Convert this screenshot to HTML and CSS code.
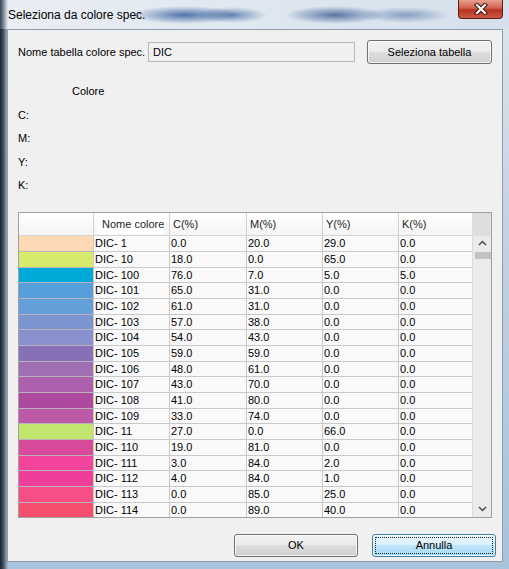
FILE: index.html
```html
<!DOCTYPE html>
<html lang="it">
<head>
  <meta charset="UTF-8" />
  <title>Seleziona da colore spec.</title>
  <link rel="stylesheet" href="styles.css">
</head>
<body>
  <div class="finestra">
    <div class="titolo">
      <span class="titolo-testo">Seleziona da colore spec.</span>
      <div class="chiudi">
        <svg width="18" height="12" viewBox="0 0 18 12">
          <path d="M5 2 L13 10 M13 2 L5 10" stroke="#3a1414" stroke-width="4.2" stroke-linecap="square"/>
          <path d="M5 2 L13 10 M13 2 L5 10" stroke="#fff" stroke-width="2.2" stroke-linecap="square"/>
        </svg>
      </div>
    </div>

    <div class="cliente">
      <div class="riga-tabella">
        <label class="etichetta">Nome tabella colore spec.</label>
        <div class="campo">DIC</div>
        <button class="bottone bottone-sel">Seleziona tabella</button>
      </div>

      <div class="info">
        <div class="info-riga colore">Colore</div>
        <div class="info-riga">C:</div>
        <div class="info-riga">M:</div>
        <div class="info-riga">Y:</div>
        <div class="info-riga">K:</div>
      </div>

      <div class="lista">
        <div class="griglia">
          <div class="riga intestazione">
            <div class="cella"></div>
            <div class="cella"><span class="nome-int">Nome colore</span></div>
            <div class="cella">C(%)</div>
            <div class="cella">M(%)</div>
            <div class="cella">Y(%)</div>
            <div class="cella">K(%)</div>
          </div>
          <div id="corpo"></div>
        </div>
        <div class="scorri">
          <div class="angolo"></div>
          <div class="freccia">
            <svg width="9" height="6" viewBox="0 0 9 6"><path d="M1 5 L4.5 1.5 L8 5" stroke="#505050" stroke-width="1.5" fill="none"/></svg>
          </div>
          <div class="cursore"></div>
          <div class="spazio"></div>
          <div class="freccia">
            <svg width="9" height="6" viewBox="0 0 9 6"><path d="M1 1 L4.5 4.5 L8 1" stroke="#505050" stroke-width="1.5" fill="none"/></svg>
          </div>
        </div>
      </div>

      <div class="pulsanti">
        <button class="bottone">OK</button>
        <button class="bottone bottone-def"><span class="fuoco">Annulla</span></button>
      </div>
    </div>
  </div>

  <script>
    const colori = [
      ['DIC- 1', '#fdd8b4', '0.0', '20.0', '29.0', '0.0'],
      ['DIC- 10', '#d6ea6c', '18.0', '0.0', '65.0', '0.0'],
      ['DIC- 100', '#00aad8', '76.0', '7.0', '5.0', '5.0'],
      ['DIC- 101', '#55a0da', '65.0', '31.0', '0.0', '0.0'],
      ['DIC- 102', '#639fd8', '61.0', '31.0', '0.0', '0.0'],
      ['DIC- 103', '#7b96cf', '57.0', '38.0', '0.0', '0.0'],
      ['DIC- 104', '#8a8fcd', '54.0', '43.0', '0.0', '0.0'],
      ['DIC- 105', '#8770b6', '59.0', '59.0', '0.0', '0.0'],
      ['DIC- 106', '#a06fb3', '48.0', '61.0', '0.0', '0.0'],
      ['DIC- 107', '#ad60ab', '43.0', '70.0', '0.0', '0.0'],
      ['DIC- 108', '#ad4a9e', '41.0', '80.0', '0.0', '0.0'],
      ['DIC- 109', '#bd5aa8', '33.0', '74.0', '0.0', '0.0'],
      ['DIC- 11', '#c2e56e', '27.0', '0.0', '66.0', '0.0'],
      ['DIC- 110', '#d84a9a', '19.0', '81.0', '0.0', '0.0'],
      ['DIC- 111', '#f2449a', '3.0', '84.0', '2.0', '0.0'],
      ['DIC- 112', '#ee3e9a', '4.0', '84.0', '1.0', '0.0'],
      ['DIC- 113', '#f54f85', '0.0', '85.0', '25.0', '0.0'],
      ['DIC- 114', '#f54e6f', '0.0', '89.0', '40.0', '0.0']
    ];

    const corpo = document.getElementById('corpo');
    colori.forEach(function (c) {
      const riga = document.createElement('div');
      riga.className = 'riga';
      riga.innerHTML =
        '<div class="cella campione" style="background:' + c[1] + '"></div>' +
        '<div class="cella">' + c[0] + '</div>' +
        '<div class="cella">' + c[2] + '</div>' +
        '<div class="cella">' + c[3] + '</div>' +
        '<div class="cella">' + c[4] + '</div>' +
        '<div class="cella">' + c[5] + '</div>';
      corpo.appendChild(riga);
    });
  </script>
</body>
</html>
```

FILE: styles.css
```css
body {
  margin: 0;
  font-family: "Liberation Sans", Arial, sans-serif;
  font-size: 11px;
  color: #000;
  background: #9fb6cc;
}

.finestra {
  width: 509px;
  height: 569px;
  display: flex;
  flex-direction: column;
  box-sizing: border-box;
  background:
    linear-gradient(to right, #1c242e 0, #3e4a58 3px, #7d90a4 6px, transparent 8px),
    linear-gradient(to bottom, #dfe6ee 0, #c3d3e2 40%, #a7c2da 100%);
}

.titolo {
  height: 29px;
  display: flex;
  align-items: flex-start;
  background:
    radial-gradient(ellipse 55px 9px at 185px 15px, rgba(30, 75, 145, 0.75), transparent),
    radial-gradient(ellipse 35px 8px at 232px 15px, rgba(30, 75, 145, 0.6), transparent),
    radial-gradient(ellipse 50px 9px at 335px 15px, rgba(30, 70, 130, 0.7), transparent),
    radial-gradient(ellipse 45px 8px at 405px 15px, rgba(50, 90, 150, 0.5), transparent),
    linear-gradient(to right, #3a4550 0, #6f7f90 3px, #e9eef3 8px, #dde6ef 60%, #d5e0ec 100%);
}

.titolo-testo {
  font-size: 12px;
  padding: 8px 0 0 8px;
  flex: 1;
}

.chiudi {
  width: 45px;
  height: 19px;
  margin-right: 6px;
  display: flex;
  align-items: center;
  justify-content: center;
  box-sizing: border-box;
  border: 1px solid #5a1e18;
  border-top: none;
  border-radius: 0 0 4px 4px;
  background: linear-gradient(to bottom, #e8a08f 0, #d1604f 45%, #b83222 55%, #cc5a44 100%);
}

.cliente {
  flex: 1;
  margin: 0 6px 7px 7px;
  border: 1px solid #8e9cab;
  background: #f0f0f0;
  padding: 10px 10px 0 10px;
  display: flex;
  flex-direction: column;
}

.riga-tabella {
  display: flex;
  align-items: center;
  height: 24px;
}

.etichetta {
  width: 130px;
}

.campo {
  width: 207px;
  height: 20px;
  box-sizing: border-box;
  border: 1px solid #b8b8b8;
  background: #f0f0f0;
  padding-left: 4px;
  line-height: 18px;
}

.bottone {
  font-family: "Liberation Sans", Arial, sans-serif;
  font-size: 11px;
  color: #000;
  width: 125px;
  height: 24px;
  padding: 0;
  border: 1px solid #707070;
  border-radius: 3px;
  background: linear-gradient(to bottom, #f2f2f2 0, #ebebeb 50%, #dddddd 50%, #cfcfcf 100%);
  box-shadow: inset 0 0 0 1px rgba(255, 255, 255, 0.7);
}

.bottone-sel {
  margin-left: auto;
}

.info {
  margin-top: 16px;
}

.info-riga {
  height: 23.5px;
  line-height: 23.5px;
}

.colore {
  padding-left: 54px;
}

.lista {
  margin-top: 14px;
  height: 306px;
  box-sizing: border-box;
  border: 1px solid #a0a0a0;
  display: flex;
  background: #fff;
}

.griglia {
  width: 454px;
  overflow: hidden;
}

.riga {
  display: grid;
  grid-template-columns: 75px 76px 77px 76px 76px 74px;
  height: 16px;
}

.riga:nth-child(3n) {
  height: 15px;
}

.cella {
  box-sizing: border-box;
  border-right: 1px solid #c9c9c9;
  border-bottom: 1px solid #c9c9c9;
  background: #f9f9f9;
  padding-left: 1px;
  line-height: 15px;
  white-space: nowrap;
  overflow: hidden;
}

.campione {
  border-bottom-color: #b9b2bd;
}

.intestazione {
  height: 23px;
}

.intestazione .cella {
  background: linear-gradient(to bottom, #ffffff 0, #f4f4f4 100%);
  border-bottom-color: #d5d5d5;
  border-right-color: #d0d0d0;
  line-height: 23px;
  padding-left: 3px;
  color: #1e1e1e;
}

.nome-int {
  display: inline-block;
  width: 62px;
  overflow: hidden;
  background: #fff;
  line-height: 19px;
  padding-left: 5px;
  vertical-align: middle;
}

.scorri {
  width: 18px;
  display: flex;
  flex-direction: column;
  background: #ebebeb;
  border-left: 1px solid #dcdcdc;
}

.angolo {
  height: 23px;
  background: #dedede;
}

.freccia {
  height: 15px;
  display: flex;
  align-items: center;
  justify-content: center;
}

.cursore {
  height: 7px;
  margin: 1px 0 0 2px;
  background: #c2c2c2;
}

.spazio {
  flex: 1;
}

.pulsanti {
  display: flex;
  justify-content: flex-end;
  gap: 14px;
  margin: 16px -4px 0 0;
}

.pulsanti .bottone {
  width: 124px;
  height: 23px;
}

.bottone-def {
  border-color: #3c7fb1;
  background: linear-gradient(to bottom, #eaf6fd 0, #d9f0fc 50%, #bee6fd 50%, #a7d9f5 100%);
  padding: 2px;
}

.fuoco {
  display: block;
  height: 100%;
  box-sizing: border-box;
  border: 1px dotted #222;
  line-height: 15px;
}
```
